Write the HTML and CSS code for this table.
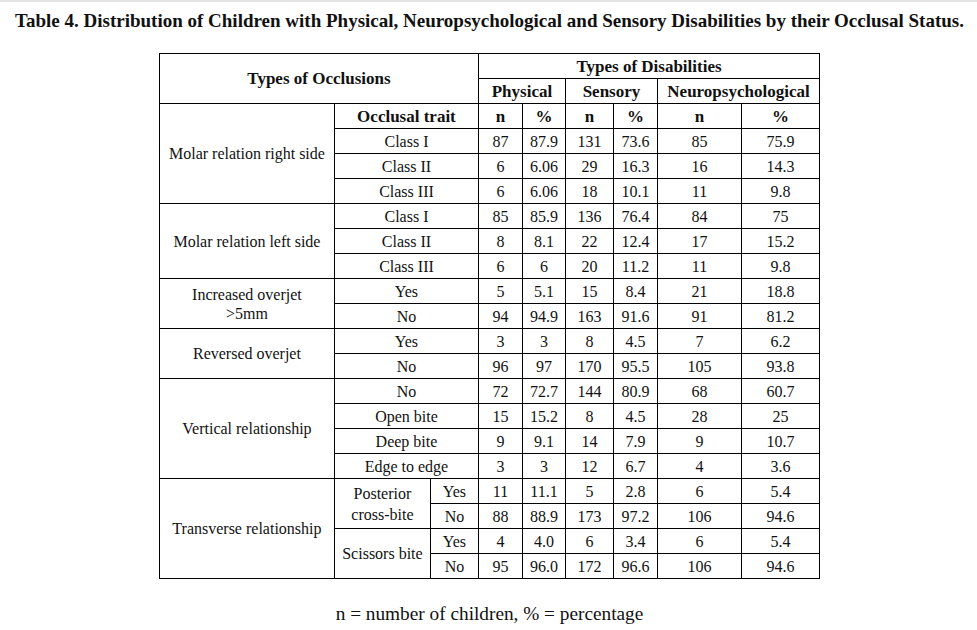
FILE: index.html
```html
<!DOCTYPE html>
<html>
<head>
<meta charset="utf-8">
<link rel="stylesheet" href="styles.css">
</head>
<body>
<div class="topbar"></div>
<div class="page">
  <h1 class="title">Table 4. Distribution of Children with Physical, Neuropsychological and Sensory Disabilities by their Occlusal Status.</h1>
  <table class="data">
    <colgroup>
      <col class="c-type"><col class="c-trait"><col class="c-yn">
      <col class="c-pn"><col class="c-pp"><col class="c-sn"><col class="c-sp"><col class="c-nn"><col class="c-np">
    </colgroup>
    <tr>
      <th rowspan="2" colspan="3">Types of Occlusions</th>
      <th colspan="6">Types of Disabilities</th>
    </tr>
    <tr>
      <th colspan="2">Physical</th>
      <th colspan="2">Sensory</th>
      <th colspan="2">Neuropsychological</th>
    </tr>
    <tr>
      <td rowspan="4">Molar relation right side</td>
      <th colspan="2">Occlusal trait</th>
      <th>n</th><th>%</th><th>n</th><th>%</th><th>n</th><th>%</th>
    </tr>
    <tr><td colspan="2">Class I</td><td>87</td><td>87.9</td><td>131</td><td>73.6</td><td>85</td><td>75.9</td></tr>
    <tr><td colspan="2">Class II</td><td>6</td><td>6.06</td><td>29</td><td>16.3</td><td>16</td><td>14.3</td></tr>
    <tr><td colspan="2">Class III</td><td>6</td><td>6.06</td><td>18</td><td>10.1</td><td>11</td><td>9.8</td></tr>
    <tr><td rowspan="3">Molar relation left side</td><td colspan="2">Class I</td><td>85</td><td>85.9</td><td>136</td><td>76.4</td><td>84</td><td>75</td></tr>
    <tr><td colspan="2">Class II</td><td>8</td><td>8.1</td><td>22</td><td>12.4</td><td>17</td><td>15.2</td></tr>
    <tr><td colspan="2">Class III</td><td>6</td><td>6</td><td>20</td><td>11.2</td><td>11</td><td>9.8</td></tr>
    <tr><td rowspan="2">Increased overjet<br>&gt;5mm</td><td colspan="2">Yes</td><td>5</td><td>5.1</td><td>15</td><td>8.4</td><td>21</td><td>18.8</td></tr>
    <tr><td colspan="2">No</td><td>94</td><td>94.9</td><td>163</td><td>91.6</td><td>91</td><td>81.2</td></tr>
    <tr><td rowspan="2">Reversed overjet</td><td colspan="2">Yes</td><td>3</td><td>3</td><td>8</td><td>4.5</td><td>7</td><td>6.2</td></tr>
    <tr><td colspan="2">No</td><td>96</td><td>97</td><td>170</td><td>95.5</td><td>105</td><td>93.8</td></tr>
    <tr><td rowspan="4">Vertical relationship</td><td colspan="2">No</td><td>72</td><td>72.7</td><td>144</td><td>80.9</td><td>68</td><td>60.7</td></tr>
    <tr><td colspan="2">Open bite</td><td>15</td><td>15.2</td><td>8</td><td>4.5</td><td>28</td><td>25</td></tr>
    <tr><td colspan="2">Deep bite</td><td>9</td><td>9.1</td><td>14</td><td>7.9</td><td>9</td><td>10.7</td></tr>
    <tr><td colspan="2">Edge to edge</td><td>3</td><td>3</td><td>12</td><td>6.7</td><td>4</td><td>3.6</td></tr>
    <tr><td rowspan="4">Transverse relationship</td><td rowspan="2" class="two">Posterior<br>cross-bite</td><td>Yes</td><td>11</td><td>11.1</td><td>5</td><td>2.8</td><td>6</td><td>5.4</td></tr>
    <tr><td>No</td><td>88</td><td>88.9</td><td>173</td><td>97.2</td><td>106</td><td>94.6</td></tr>
    <tr><td rowspan="2">Scissors bite</td><td>Yes</td><td>4</td><td>4.0</td><td>6</td><td>3.4</td><td>6</td><td>5.4</td></tr>
    <tr><td>No</td><td>95</td><td>96.0</td><td>172</td><td>96.6</td><td>106</td><td>94.6</td></tr>
  </table>
  <p class="note">n = number of children, % = percentage</p>
</div>
</body>
</html>
```
FILE: styles.css
```css
html, body {
  margin: 0;
  padding: 0;
  background: #fff;
}
body {
  font-family: "Liberation Serif", "Times New Roman", serif;
  color: #111;
}
.topbar {
  height: 2px;
  background: #e3e3e3;
}
.page {
  display: flex;
  flex-direction: column;
  align-items: center;
}
.title {
  margin: 8px 0 0;
  padding-left: 2px;
  font-size: 19px;
  font-weight: bold;
  line-height: 22px;
  white-space: nowrap;
}
.data {
  margin-top: 21px;
  margin-left: 2px;
  border-collapse: collapse;
  table-layout: fixed;
  width: 661px;
  font-size: 16px;
}
.data td, .data th {
  border: 1px solid #000;
  height: 24px;
  padding: 0;
  text-align: center;
  vertical-align: middle;
  line-height: 19px;
}
.data td.two {
  line-height: 21px;
}
.data th {
  font-weight: bold;
  font-size: 17px;
}
.c-type { width: 175px; }
.c-trait { width: 96px; }
.c-yn { width: 48px; }
.c-pn { width: 44px; }
.c-pp { width: 43px; }
.c-sn { width: 48px; }
.c-sp { width: 44px; }
.c-nn { width: 84px; }
.c-np { width: 78px; }
.note {
  margin: 24px 0 0;
  padding-left: 2px;
  font-size: 19.3px;
  line-height: 22px;
}
```
